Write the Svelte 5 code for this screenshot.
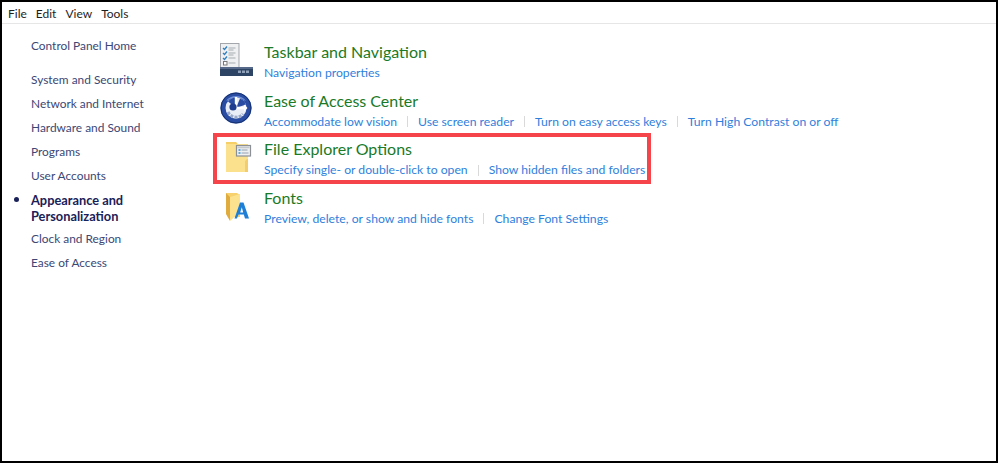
<script lang="ts">
  const menu = ['File', 'Edit', 'View', 'Tools'];
  const nav = ['System and Security', 'Network and Internet', 'Hardware and Sound', 'Programs', 'User Accounts'];
  const navAfter = ['Clock and Region', 'Ease of Access'];
  const rows = [
    { icon: 'taskbar', title: 'Taskbar and Navigation', links: ['Navigation properties'] },
    { icon: 'access', title: 'Ease of Access Center', links: ['Accommodate low vision', 'Use screen reader', 'Turn on easy access keys', 'Turn High Contrast on or off'] },
    { icon: 'explorer', title: 'File Explorer Options', links: ['Specify single- or double-click to open', 'Show hidden files and folders'] },
    { icon: 'fonts', title: 'Fonts', links: ['Preview, delete, or show and hide fonts', 'Change Font Settings'] },
  ];
</script>

<div class="window">
  <div class="menubar">
    {#each menu as item}
      <span>{item}</span>
    {/each}
  </div>

  <div class="body">
    <aside class="sidebar">
      <div class="home">Control Panel Home</div>
      {#each nav as item}
        <div class="nav-item">{item}</div>
      {/each}
      <div class="nav-active">Appearance and<br />Personalization</div>
      {#each navAfter as item}
        <div class="nav-item">{item}</div>
      {/each}
    </aside>

    <main class="content">
      {#each rows as row}
        <section class="row">
          <div class="icon">
            {#if row.icon === 'taskbar'}
              <svg width="34" height="34" viewBox="0 0 34 34">
                <rect x="0.5" y="0.5" width="18.5" height="24" fill="#eef0f1" stroke="#a3a7ab" />
                <path d="M3 5l1.500 1.500L7 3.500M3 10l1.500 1.500L7 8.500M3 15l1.500 1.500L7 13.500" stroke="#2f7fc0" stroke-width="1.3" fill="none" />
                <path d="M8.500 5h7M8.500 7h5M8.500 10h7M8.500 12h5M8.500 15h7M8.500 20h7" stroke="#a9adb1" stroke-width="1" />
                <rect x="3.500" y="18.500" width="3.500" height="3.500" fill="#fff" stroke="#777" />
                <rect x="0" y="24" width="33" height="9" fill="#2e4464" />
                <rect x="0" y="24" width="33" height="2" fill="#56698a" />
                <path d="M18 27.500h3v2.500h-3zM22 27.500h3v2.500h-3zM26 27.500h3v2.500h-3z" fill="#8fa1b8" />
              </svg>
            {:else if row.icon === 'access'}
              <svg width="32" height="32" viewBox="0 0 32 32">
                <circle cx="16" cy="16" r="15.500" fill="#2a4da3" />
                <circle cx="16" cy="16" r="15" fill="none" stroke="#15306f" />
                <path d="M6 9a12.500 12.500 0 0 1 20 0a18 18 0 0 0-20 0z" fill="#6f8fd8" />
                <circle cx="16" cy="16" r="10.500" fill="#e9edf5" />
                <path d="M16 16L8 9.500A10.500 10.500 0 0 1 16 5.500z" fill="#2a4da3" />
                <path d="M16 16l10-3.500A10.500 10.500 0 0 0 20 6.500z" fill="#2a4da3" />
                <path d="M16 5v11h9" fill="none" stroke="#fff" stroke-width="2.400" />
                <path d="M24 12.500l3.500 3.500-3.500 3.500z" fill="#fff" />
                <circle cx="13" cy="15" r="3.600" fill="#1f3d8f" />
                <path d="M8 20a9 9 0 0 0 15 2" fill="none" stroke="#9aa9c9" stroke-width="3" stroke-dasharray="3 1.200" />
              </svg>
            {:else if row.icon === 'explorer'}
              <svg width="34" height="32" viewBox="0 0 34 32">
                <path d="M6 2h10l1.500 2H28v28H6z" fill="#fbe08e" />
                <path d="M6 2h10l1.500 2H6z" fill="#f6cf66" />
                <path d="M25 21l2-2h1v13h-3z" fill="#f2cd6e" />
                <rect x="16.500" y="5.500" width="14" height="10.500" fill="#eef0f2" stroke="#8c9094" stroke-width="1.200" />
                <rect x="17.500" y="6.500" width="12" height="1.800" fill="#c3c8cd" />
                <path d="M18.500 10h2M18.500 13h2" stroke="#3a8fd0" stroke-width="1.600" />
                <path d="M21.500 10h6M21.500 13h7" stroke="#8a97a5" stroke-width="0.900" />
              </svg>
            {:else}
              <svg width="34" height="34" viewBox="0 0 34 34">
                <path d="M6 4h11l3 2v22H10z" fill="#f6d16e" />
                <path d="M10 8l10-3v18l-10 9z" fill="#fce28f" />
                <path d="M6 4l4 4v24l-4-7z" fill="#e0ac3f" />
                <path d="M20 13.500h3.500l5.500 16h-4l-1.200-4h-5.300l-1.600 4H14.500zM20.200 23.500h3l-1.400-5.200z" fill="#1f7fd6" fill-rule="evenodd" />
              </svg>
            {/if}
          </div>
          <div class="text">
            <h2>{row.title}</h2>
            <div class="links">
              {#each row.links as link}
                <a href="#top">{link}</a>
              {/each}
            </div>
          </div>
        </section>
      {/each}
      <div class="highlight"></div>
    </main>
  </div>
</div>

<style>
  :global(body) {
    margin: 0;
    background: #fff;
  }

  .window {
    box-sizing: border-box;
    width: 998px;
    height: 463px;
    border: 2px solid #000;
    background: #fff;
    font-family: "Lato", "Open Sans", sans-serif;
    font-size: 12.2px;
    overflow: hidden;
  }

  .menubar {
    display: flex;
    gap: 9px;
    padding: 1px 0 0 6px;
    box-sizing: border-box;
    height: 22px;
    align-items: center;
    border-bottom: 1px solid #e6e6e6;
    font-size: 12px;
    color: #1e1e1e;
  }

  .body {
    display: flex;
  }

  .sidebar {
    box-sizing: border-box;
    width: 218px;
    padding: 11.500px 0 0 29px;
    font-size: 11.9px;
    color: #3b4775;
  }

  .home {
    height: 34px;
    line-height: 20px;
  }

  .nav-item {
    height: 24px;
    line-height: 20px;
  }

  .nav-active {
    position: relative;
    line-height: 16px;
    height: 39px;
    padding-top: 2px;
    box-sizing: border-box;
    font-size: 12.8px;
    font-weight: 700;
    color: #1a2158;
  }

  .nav-active::before {
    content: '';
    position: absolute;
    left: -17px;
    top: 7px;
    width: 5px;
    height: 5px;
    border-radius: 50%;
    background: #1a2158;
  }

  .content {
    position: relative;
    flex: 1;
    padding-top: 17px;
  }

  .row {
    display: flex;
    height: 48.5px;
  }

  .icon {
    width: 44px;
    display: flex;
    padding-top: 2px;
  }

  h2 {
    margin: 0;
    font-size: 16px;
    font-weight: 400;
    line-height: 21px;
    color: #1a7a28;
  }

  .links {
    display: flex;
    margin-top: 2px;
    line-height: 18px;
  }

  a {
    color: #2f7fdc;
    text-decoration: none;
  }

  a + a {
    margin-left: 10px;
    padding-left: 11px;
    background: linear-gradient(#d9d9d9, #d9d9d9) left center / 1px 11px no-repeat;
  }

  .highlight {
    position: absolute;
    left: -7px;
    top: 109px;
    width: 430px;
    height: 43px;
    border: 4px solid #f5444a;
  }
</style>
